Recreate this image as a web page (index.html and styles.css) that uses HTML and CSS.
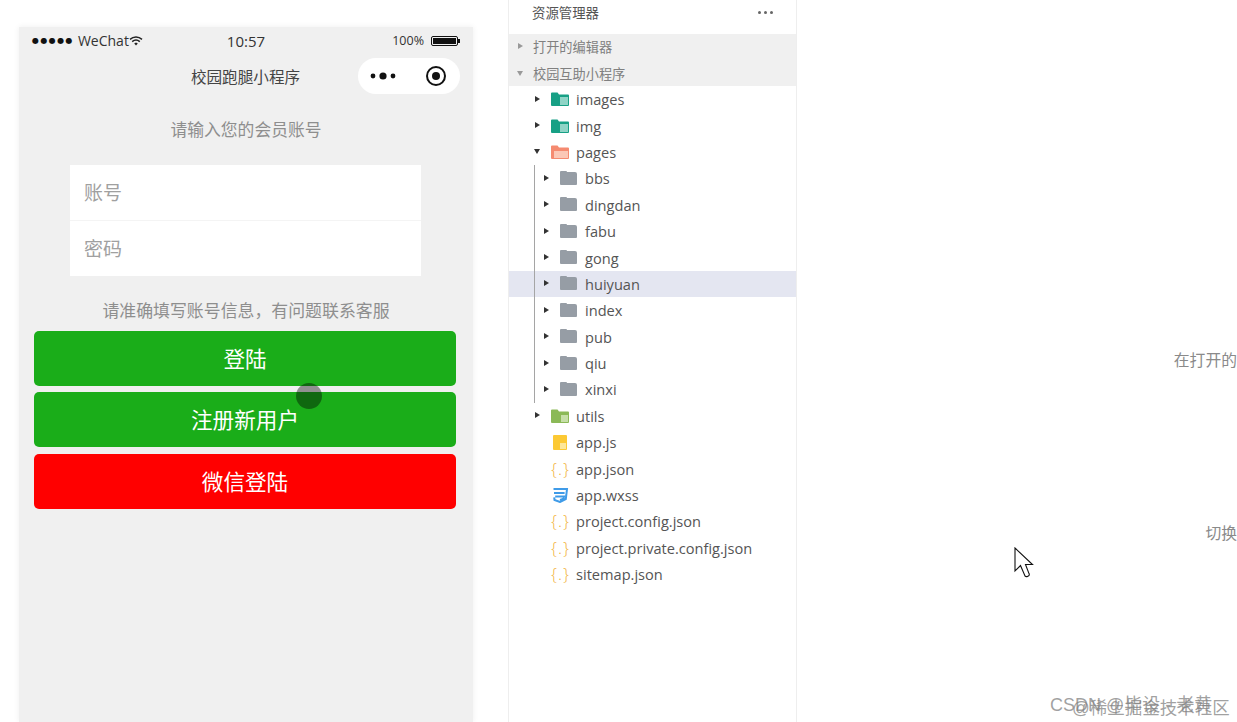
FILE: index.html
```html
<!DOCTYPE html>
<html>
<head>
    <title>校园跑腿小程序</title>
    <link rel="stylesheet" href="styles.css">
</head>
<body>
    <div class="phone-col">
        <div class="phone">
            <div class="status-bar">
                <div class="status-left">
                    <span class="signal">●●●●●</span>
                    <span>WeChat</span>
                    <svg class="wifi" width="14" height="10" viewBox="0 0 14 10">
                        <path d="M1 3.4 C4.5 0.2 9.5 0.2 13 3.4" fill="none" stroke="#222" stroke-width="1.5"/>
                        <path d="M3.2 5.6 C5.4 3.7 8.6 3.7 10.8 5.6" fill="none" stroke="#222" stroke-width="1.5"/>
                        <path d="M5.2 7.6 L7 6.4 L8.8 7.6 L7 9.6 Z" fill="#222"/>
                    </svg>
                </div>
                <div class="status-time">10:57</div>
                <div class="status-right">
                    <span>100%</span>
                    <span class="battery"><span class="battery-fill"></span></span>
                    <span class="battery-tip"></span>
                </div>
            </div>
            <div class="nav-bar">
                <div class="nav-title">校园跑腿小程序</div>
                <div class="capsule">
                    <svg width="28" height="10" viewBox="0 0 28 10">
                        <circle cx="3" cy="5" r="2.4" fill="#111"/>
                        <circle cx="13" cy="5" r="3.6" fill="#111"/>
                        <circle cx="23" cy="5" r="2.4" fill="#111"/>
                    </svg>
                    <svg width="22" height="22" viewBox="0 0 22 22">
                        <circle cx="11" cy="11" r="9" fill="none" stroke="#111" stroke-width="2"/>
                        <circle cx="11" cy="11" r="4" fill="#111"/>
                    </svg>
                </div>
            </div>
            <div class="hint-top">请输入您的会员账号</div>
            <div class="login-box">
                <div class="field">账号</div>
                <div class="field">密码</div>
            </div>
            <div class="hint-bottom">请准确填写账号信息，有问题联系客服</div>
            <div class="btn-list">
                <div class="btn btn-green">登陆</div>
                <div class="btn btn-green">注册新用户</div>
                <div class="btn btn-red">微信登陆</div>
                <div class="click-dot"></div>
            </div>
        </div>
    </div>

    <div class="explorer">
        <div class="explorer-head">
            <span>资源管理器</span>
            <span class="more">
                <i></i><i></i><i></i>
            </span>
        </div>
        <div class="section section-first"><span class="arrow arrow-right arrow-grey"></span>打开的编辑器</div>
        <div class="section section-second"><span class="arrow arrow-down arrow-grey"></span>校园互助小程序</div>

        <div class="row">
            <span class="arrow arrow-right"></span>
            <svg class="icon" width="18" height="14" viewBox="0 0 18 14"><path d="M0 1.5 Q0 .5 1 .5 H6.5 L8 2.5 H17 Q18 2.5 18 3.5 V13 Q18 14 17 14 H1 Q0 14 0 13 Z" fill="#17a085"/><rect x="9" y="5" width="8" height="8" fill="#8fd4c6"/></svg>
            <span class="name">images</span>
        </div>
        <div class="row">
            <span class="arrow arrow-right"></span>
            <svg class="icon" width="18" height="14" viewBox="0 0 18 14"><path d="M0 1.5 Q0 .5 1 .5 H6.5 L8 2.5 H17 Q18 2.5 18 3.5 V13 Q18 14 17 14 H1 Q0 14 0 13 Z" fill="#17a085"/><rect x="9" y="5" width="8" height="8" fill="#8fd4c6"/></svg>
            <span class="name">img</span>
        </div>
        <div class="row">
            <span class="arrow arrow-down"></span>
            <svg class="icon" width="18" height="14" viewBox="0 0 18 14"><path d="M0 1.5 Q0 .5 1 .5 H6.5 L8 2.5 H17 Q18 2.5 18 3.5 V13 Q18 14 17 14 H1 Q0 14 0 13 Z" fill="#f58a70"/><rect x="3" y="6" width="14" height="7" fill="#fbc7b6"/></svg>
            <span class="name">pages</span>
        </div>

        <div class="subtree">
            <div class="row row-sub"><span class="arrow arrow-right"></span><span class="folder"></span><span class="name">bbs</span></div>
            <div class="row row-sub"><span class="arrow arrow-right"></span><span class="folder"></span><span class="name">dingdan</span></div>
            <div class="row row-sub"><span class="arrow arrow-right"></span><span class="folder"></span><span class="name">fabu</span></div>
            <div class="row row-sub"><span class="arrow arrow-right"></span><span class="folder"></span><span class="name">gong</span></div>
            <div class="row row-sub row-active"><span class="arrow arrow-right"></span><span class="folder"></span><span class="name">huiyuan</span></div>
            <div class="row row-sub"><span class="arrow arrow-right"></span><span class="folder"></span><span class="name">index</span></div>
            <div class="row row-sub"><span class="arrow arrow-right"></span><span class="folder"></span><span class="name">pub</span></div>
            <div class="row row-sub"><span class="arrow arrow-right"></span><span class="folder"></span><span class="name">qiu</span></div>
            <div class="row row-sub"><span class="arrow arrow-right"></span><span class="folder"></span><span class="name">xinxi</span></div>
        </div>

        <div class="row">
            <span class="arrow arrow-right"></span>
            <svg class="icon" width="18" height="14" viewBox="0 0 18 14"><path d="M0 1.5 Q0 .5 1 .5 H6.5 L8 2.5 H17 Q18 2.5 18 3.5 V13 Q18 14 17 14 H1 Q0 14 0 13 Z" fill="#8bb957"/><rect x="10" y="6" width="7" height="7" fill="#c6dfa8"/></svg>
            <span class="name">utils</span>
        </div>
        <div class="row">
            <span class="arrow arrow-none"></span>
            <svg class="icon" width="18" height="15" viewBox="0 0 18 15"><rect x="2" y="0" width="14" height="15" rx="1" fill="#fcc934"/><rect x="9" y="8" width="6" height="6" fill="#fde79a"/></svg>
            <span class="name">app.js</span>
        </div>
        <div class="row">
            <span class="arrow arrow-none"></span>
            <span class="braces">{<i>.</i>}</span>
            <span class="name">app.json</span>
        </div>
        <div class="row">
            <span class="arrow arrow-none"></span>
            <svg class="icon" width="18" height="15" viewBox="0 0 18 15"><path d="M2.5 1 H16 L14.8 11 L9 14 L3.5 12 L3.2 9.4 M3 5 H13.6 M4.2 8.6 H13 L12.5 10.8 L9 12" fill="none" stroke="#3f9be8" stroke-width="2"/></svg>
            <span class="name">app.wxss</span>
        </div>
        <div class="row">
            <span class="arrow arrow-none"></span>
            <span class="braces">{<i>.</i>}</span>
            <span class="name">project.config.json</span>
        </div>
        <div class="row">
            <span class="arrow arrow-none"></span>
            <span class="braces">{<i>.</i>}</span>
            <span class="name">project.private.config.json</span>
        </div>
        <div class="row">
            <span class="arrow arrow-none"></span>
            <span class="braces">{<i>.</i>}</span>
            <span class="name">sitemap.json</span>
        </div>
    </div>

    <div class="main-area">
        <div class="side-text side-text-1">在打开的</div>
        <div class="side-text side-text-2">切换</div>

        <svg class="cursor" width="20" height="31" viewBox="0 0 20 31">
            <path d="M1 1 V24 L6.5 18.5 L11 29 Q12 30 13.5 29.4 L15 28.5 Q15.6 27.8 15 26.6 L11.5 17.5 H18.5 Z" fill="#fff" stroke="#111" stroke-width="1.1"/>
        </svg>

        <div class="watermark">CSDN @毕设 - 老黄</div>
        <div class="watermark watermark-2">@稀土掘金技术社区</div>
    </div>
</body>
</html>
```

FILE: styles.css
```css
html, body {
    height: 100%;
}

body {
    margin: 0;
    height: 722px;
    overflow: hidden;
    background: #fff;
    display: flex;
    font-family: "Open Sans", "Noto Sans CJK SC", sans-serif;
    color: #555;
}

.phone-col {
    width: 508px;
    flex-shrink: 0;
    padding: 27px 35px 0 19px;
    box-sizing: border-box;
}

.phone {
    height: 695px;
    background: #f0f0f0;
    box-shadow: 0 0 6px rgba(0, 0, 0, 0.07);
}

.status-bar {
    height: 27px;
    padding: 0 13px;
    display: grid;
    grid-template-columns: 1fr 1fr 1fr;
    align-items: center;
    font-size: 14px;
    color: #333;
}

.status-left {
    display: flex;
    align-items: center;
    gap: 4px;
    white-space: nowrap;
}

.signal {
    font-size: 8px;
    letter-spacing: 1.4px;
    color: #111;
    font-family: "DejaVu Sans", sans-serif;
}

.wifi {
    margin-left: -4px;
}

.status-time {
    text-align: center;
    font-size: 15px;
}

.status-right {
    display: flex;
    align-items: center;
    justify-content: flex-end;
    font-size: 12.5px;
    gap: 7px;
}

.battery {
    width: 27px;
    height: 10px;
    border: 1px solid #111;
    border-radius: 2px;
    padding: 1px;
    box-sizing: border-box;
    display: block;
}

.battery-fill {
    display: block;
    height: 100%;
    background: #111;
}

.battery-tip {
    width: 2px;
    height: 4px;
    background: #111;
    margin-left: -7px;
}

.nav-bar {
    height: 44px;
    display: flex;
    align-items: center;
    justify-content: flex-end;
    padding-right: 13px;
    position: relative;
}

.nav-title {
    position: absolute;
    left: 0;
    width: 453px;
    text-align: center;
    font-size: 15.6px;
    color: #444;
}

.capsule {
    width: 102px;
    height: 36px;
    border-radius: 18px;
    background: #fff;
    display: flex;
    align-items: center;
    justify-content: space-between;
    padding: 0 13px 0 12px;
    box-sizing: border-box;
}

.hint-top {
    margin-top: 22px;
    text-align: center;
    font-size: 16.8px;
    line-height: 20px;
    color: #8e8e8e;
}

.login-box {
    width: 351px;
    margin: 25px 0 0 51px;
    background: #fff;
}

.field {
    height: 55.5px;
    line-height: 57px;
    box-sizing: border-box;
    padding-left: 14px;
    font-size: 19px;
    color: #a0a0a0;
    border-bottom: 1px solid #f4f4f4;
}

.field:last-child {
    border-bottom: none;
}

.hint-bottom {
    margin-top: 25px;
    text-align: center;
    font-size: 16.9px;
    line-height: 20px;
    color: #8e8e8e;
}

.btn-list {
    position: relative;
    margin: 10px 17px 0 15px;
    display: flex;
    flex-direction: column;
    gap: 6px;
}

.btn {
    height: 55px;
    line-height: 55px;
    border-radius: 5px;
    text-align: center;
    color: #fff;
    font-size: 21.6px;
}

.btn-green {
    background: #1aad19;
}

.btn-red {
    background: #f00;
    margin-top: 1px;
}

.click-dot {
    position: absolute;
    left: 262px;
    top: 52px;
    width: 26px;
    height: 26px;
    border-radius: 50%;
    background: rgba(0, 0, 0, 0.4);
}

.explorer {
    width: 289px;
    flex-shrink: 0;
    box-sizing: border-box;
    border-left: 1px solid #eee;
    border-right: 1px solid #eee;
    font-size: 14.6px;
}

.explorer-head {
    height: 34px;
    padding: 0 23px 10px;
    box-sizing: border-box;
    display: flex;
    align-items: center;
    justify-content: space-between;
    font-size: 13.4px;
    color: #555;
}

.more {
    display: flex;
    gap: 3px;
}

.more i {
    width: 3px;
    height: 3px;
    border-radius: 50%;
    background: #666;
}

.section {
    background: #f0f0f0;
    font-size: 13.2px;
    color: #808080;
    padding-left: 8px;
    box-sizing: border-box;
    display: flex;
    align-items: center;
}

.section .arrow {
    margin-right: 9px;
}

.section-first {
    height: 24px;
}

.section-second {
    height: 28px;
    padding-top: 2px;
}

.row {
    height: 26.4px;
    display: flex;
    align-items: center;
    padding-left: 25px;
    color: #555;
}

.row-sub {
    padding-left: 34px;
}

.row-active {
    background: #e4e6f1;
}

.subtree {
    position: relative;
}

.subtree::before {
    content: "";
    position: absolute;
    left: 25px;
    top: 0;
    bottom: 0;
    width: 1px;
    background: #a5a5a5;
}

.arrow {
    width: 7px;
    height: 7px;
    flex-shrink: 0;
    margin-right: 10px;
    position: relative;
    display: block;
}

.arrow-right::after {
    content: "";
    position: absolute;
    left: 1px;
    top: 0;
    border-left: 5px solid #333;
    border-top: 3.5px solid transparent;
    border-bottom: 3.5px solid transparent;
}

.arrow-down::after {
    content: "";
    position: absolute;
    left: 0;
    top: 1px;
    border-top: 5px solid #333;
    border-left: 3.5px solid transparent;
    border-right: 3.5px solid transparent;
}

.arrow-right.arrow-grey::after {
    border-left-color: #999;
}

.arrow-down.arrow-grey::after {
    border-top-color: #999;
}

.icon {
    flex-shrink: 0;
    margin-right: 7px;
}

.folder {
    width: 17px;
    height: 13px;
    margin-right: 8px;
    flex-shrink: 0;
    background: #969da5;
    border-radius: 2px 2px 1px 1px;
    position: relative;
}

.folder::before {
    content: "";
    position: absolute;
    left: 0;
    top: -1px;
    width: 7px;
    height: 3px;
    background: #969da5;
    border-radius: 1px 1px 0 0;
}

.braces {
    width: 18px;
    margin-right: 7px;
    flex-shrink: 0;
    font-family: "Open Sans", sans-serif;
    font-weight: 300;
    font-size: 17px;
    line-height: 18px;
    color: #f2b544;
    display: flex;
    justify-content: space-between;
}

.braces i {
    font-style: normal;
}

.name {
    white-space: nowrap;
}

.main-area {
    flex: 1;
    position: relative;
    overflow: hidden;
}

.side-text {
    position: absolute;
    white-space: nowrap;
    font-size: 15.8px;
    color: #8a8a8a;
}

.side-text-1 {
    right: 0;
    top: 348px;
}

.side-text-2 {
    right: 0;
    top: 521px;
}

.cursor {
    position: absolute;
    left: 217px;
    top: 547px;
}

.watermark {
    position: absolute;
    left: 253px;
    top: 690px;
    font-family: "Liberation Sans", "Noto Sans CJK SC", sans-serif;
    font-size: 18px;
    color: rgba(130, 130, 130, 0.75);
    white-space: nowrap;
}

.watermark-2 {
    left: 275px;
    top: 694px;
    font-size: 17.5px;
}
```
